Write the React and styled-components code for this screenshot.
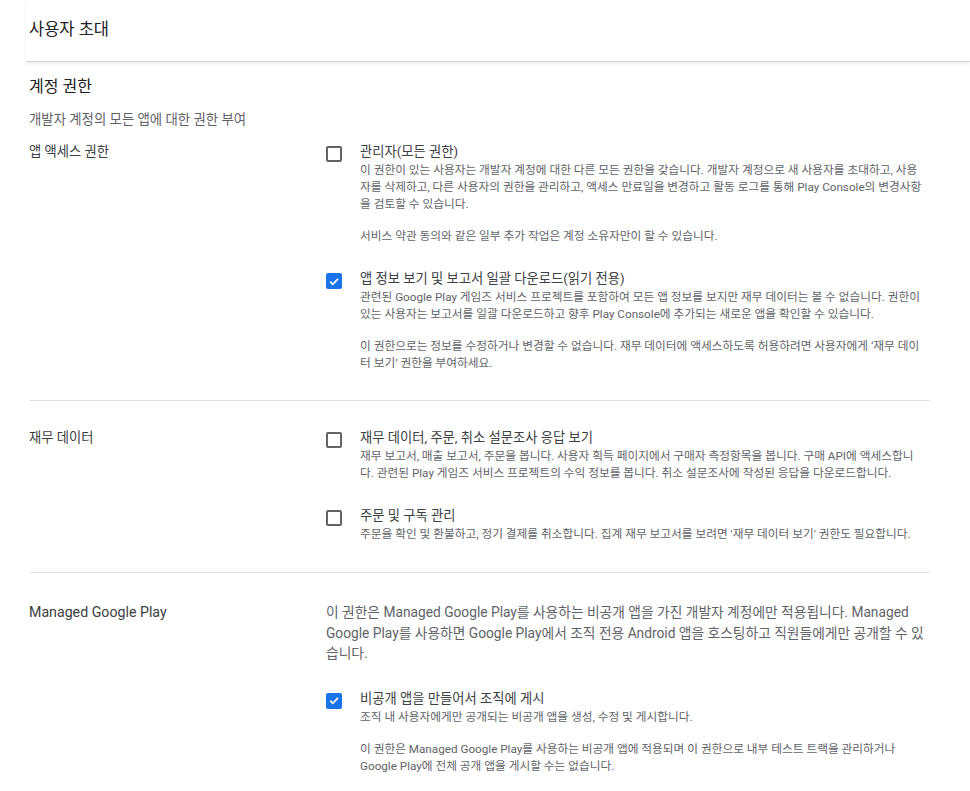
import React from "react";
import styled, { createGlobalStyle } from "styled-components";

const GlobalStyle = createGlobalStyle`
	html, body {
		margin: 0;
		padding: 0;
		background: #ffffff;
		overflow: hidden;
	}
	body {
		font-family: Roboto, "Noto Sans CJK KR", sans-serif;
		color: #3c4043;
	}
`;

const sections = [
	{
		label: "앱 액세스 권한",
		items: [
			{
				title: "관리자(모든 권한)",
				checked: false,
				paras: [
					[
						"이 권한이 있는 사용자는 개발자 계정에 대한 다른 모든 권한을 갖습니다. 개발자 계정으로 새 사용자를 초대하고, 사용",
						"자를 삭제하고, 다른 사용자의 권한을 관리하고, 액세스 만료일을 변경하고 활동 로그를 통해 Play Console의 변경사항",
						"을 검토할 수 있습니다.",
					],
					["서비스 약관 동의와 같은 일부 추가 작업은 계정 소유자만이 할 수 있습니다."],
				],
			},
			{
				title: "앱 정보 보기 및 보고서 일괄 다운로드(읽기 전용)",
				checked: true,
				paras: [
					[
						"관련된 Google Play 게임즈 서비스 프로젝트를 포함하여 모든 앱 정보를 보지만 재무 데이터는 볼 수 없습니다. 권한이",
						"있는 사용자는 보고서를 일괄 다운로드하고 향후 Play Console에 추가되는 새로운 앱을 확인할 수 있습니다.",
					],
					[
						"이 권한으로는 정보를 수정하거나 변경할 수 없습니다. 재무 데이터에 액세스하도록 허용하려면 사용자에게 ‘재무 데이",
						"터 보기’ 권한을 부여하세요.",
					],
				],
			},
		],
	},
	{
		label: "재무 데이터",
		items: [
			{
				title: "재무 데이터, 주문, 취소 설문조사 응답 보기",
				checked: false,
				paras: [
					[
						"재무 보고서, 매출 보고서, 주문을 봅니다. 사용자 획득 페이지에서 구매자 측정항목을 봅니다. 구매 API에 액세스합니",
						"다. 관련된 Play 게임즈 서비스 프로젝트의 수익 정보를 봅니다. 취소 설문조사에 작성된 응답을 다운로드합니다.",
					],
				],
			},
			{
				title: "주문 및 구독 관리",
				checked: false,
				paras: [
					[
						"주문을 확인 및 환불하고, 정기 결제를 취소합니다. 집계 재무 보고서를 보려면 '재무 데이터 보기' 권한도 필요합니다.",
					],
				],
			},
		],
	},
	{
		label: "Managed Google Play",
		latin: true,
		intro: [
			"이 권한은 Managed Google Play를 사용하는 비공개 앱을 가진 개발자 계정에만 적용됩니다. Managed",
			"Google Play를 사용하면 Google Play에서 조직 전용 Android 앱을 호스팅하고 직원들에게만 공개할 수 있",
			"습니다.",
		],
		items: [
			{
				title: "비공개 앱을 만들어서 조직에 게시",
				checked: true,
				paras: [
					["조직 내 사용자에게만 공개되는 비공개 앱을 생성, 수정 및 게시합니다."],
					[
						"이 권한은 Managed Google Play를 사용하는 비공개 앱에 적용되며 이 권한으로 내부 테스트 트랙을 관리하거나",
						"Google Play에 전체 공개 앱을 게시할 수는 없습니다.",
					],
				],
			},
		],
	},
];

const Lines = ({ lines }) =>
	lines.map((line, i) => (
		<React.Fragment key={i}>
			{i > 0 && <br />}
			{line}
		</React.Fragment>
	));

const Checkbox = ({ checked }) => (
	<Box $checked={checked}>
		{checked && (
			<svg width="13" height="13" viewBox="0 0 14 14">
				<path
					d="M2.6 7.2l3 3L11.6 4"
					fill="none"
					stroke="#ffffff"
					strokeWidth="2"
				/>
			</svg>
		)}
	</Box>
);

const App = () => {
	return (
		<Page>
			<GlobalStyle />
			<Header>
				<HeaderTitle>사용자 초대</HeaderTitle>
			</Header>
			<Content>
				<SectionTitle>계정 권한</SectionTitle>
				<SubTitle>개발자 계정의 모든 앱에 대한 권한 부여</SubTitle>
				{sections.map((section, si) => (
					<Row key={si} $first={si === 0} $last={si === sections.length - 1}>
						<RowLabel $latin={section.latin}>{section.label}</RowLabel>
						<RowBody>
							{section.intro && (
								<Intro>
									<Lines lines={section.intro} />
								</Intro>
							)}
							{section.items.map((item, ii) => (
								<Item key={ii}>
									<Checkbox checked={item.checked} />
									<ItemText>
										<ItemTitle>{item.title}</ItemTitle>
										{item.paras.map((p, pi) => (
											<Desc key={pi}>
												<Lines lines={p} />
											</Desc>
										))}
									</ItemText>
								</Item>
							))}
						</RowBody>
					</Row>
				))}
			</Content>
		</Page>
	);
};

const Page = styled.div`
	width: 100%;
	min-height: 791px;
	background: #ffffff;
`;
const Header = styled.div`
	margin-left: 26px;
	padding-left: 3px;
	display: flex;
	align-items: center;
	border-bottom: 1px solid #d6d6d6;
	box-shadow: 0 2px 3px rgba(0, 0, 0, 0.08);
	box-sizing: border-box;
	height: 62px;
`;
const HeaderTitle = styled.h1`
	margin: 0;
	margin-top: -1px;
	font-size: 16.5px;
	font-weight: 400;
	color: #202124;
	line-height: 22px;
`;
const Content = styled.div`
	padding: 0 40px 0 29px;
`;
const SectionTitle = styled.h2`
	margin: 15px 0 0;
	font-size: 16px;
	font-weight: 400;
	line-height: 20px;
	color: #202124;
`;
const SubTitle = styled.p`
	margin: 13px 0 0;
	font-size: 13.4px;
	line-height: 20px;
	color: #5f6368;
`;
const Row = styled.div`
	display: grid;
	grid-template-columns: 297px 1fr;
	padding: ${(props) => (props.$first ? "12px" : "27px")} 0
		${(props) => (props.$first ? "28px" : "29px")};
	border-bottom: ${(props) => (props.$last ? "none" : "1px solid #e0e0e0")};
`;
const RowLabel = styled.div`
	font-size: ${(props) => (props.$latin ? "14.2px" : "13.3px")};
	line-height: 20px;
	color: #3c4043;
	padding-top: ${(props) => (props.$latin ? "2px" : "0")};
`;
const RowBody = styled.div`
	display: flex;
	flex-direction: column;
	gap: 24px;
`;
const Intro = styled.p`
	margin: 2px 0 1px;
	font-size: 13.75px;
	line-height: 20.5px;
	color: #5f6368;
	white-space: nowrap;
`;
const Item = styled.div`
	display: flex;
	align-items: flex-start;
	gap: 18px;
`;
const Box = styled.span`
	flex: none;
	width: 16px;
	height: 16px;
	margin-top: 4px;
	box-sizing: border-box;
	border-radius: 2px;
	border: 2px solid ${(props) => (props.$checked ? "#1a73e8" : "#5f6368")};
	background: ${(props) => (props.$checked ? "#1a73e8" : "#ffffff")};
	display: flex;
	align-items: center;
	justify-content: center;
`;
const ItemText = styled.div`
	display: flex;
	flex-direction: column;
`;
const ItemTitle = styled.div`
	font-size: 13.3px;
	line-height: 20px;
	color: #3c4043;
`;
const Desc = styled.p`
	margin: 0;
	font-size: 11.7px;
	line-height: 17px;
	color: #5f6368;
	white-space: nowrap;
	& + p {
		margin-top: 15px;
	}
`;

export default App;
